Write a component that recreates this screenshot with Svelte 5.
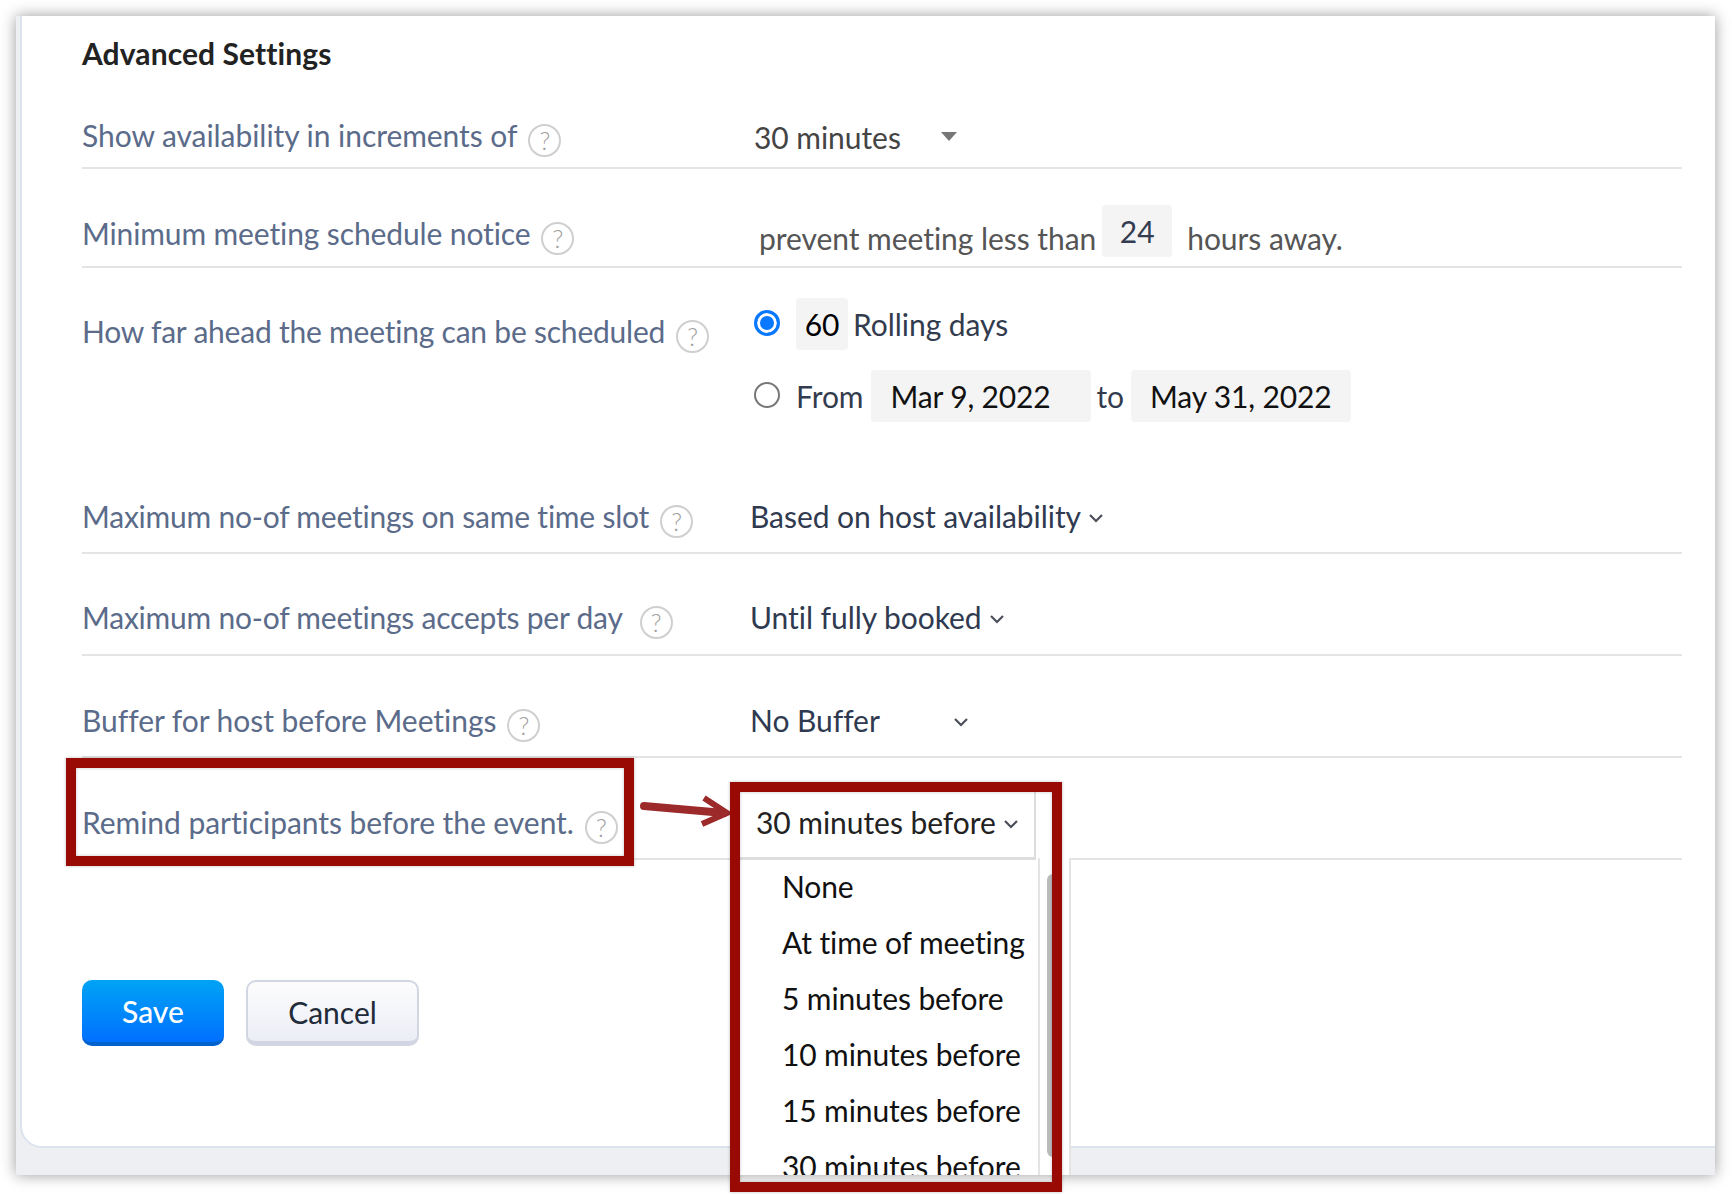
<script>
  const options = ['None', 'At time of meeting', '5 minutes before', '10 minutes before', '15 minutes before', '30 minutes before'];
</script>

{#snippet help()}
  <span class="help">?</span>
{/snippet}

{#snippet chevron()}
  <svg class="chevron" viewBox="0 0 14 10" width="14" height="10" aria-hidden="true">
    <path d="M1 2 L7 8 L13 2" fill="none" stroke="#4a4f5a" stroke-width="2.2" />
  </svg>
{/snippet}

<div class="page">
  <div class="window">
    <div class="card">
      <h2>Advanced Settings</h2>

      <div class="row first">
        <div class="label">Show availability in increments of {@render help()}</div>
        <div class="value increments">
          <span>30 minutes</span>
          <i class="caret"></i>
        </div>
      </div>

      <div class="row notice">
        <div class="label snug">Minimum meeting schedule notice {@render help()}</div>
        <div class="value prevent">
          <span>prevent meeting less than</span>
          <span class="field hours">24</span>
          <span>hours away.</span>
        </div>
      </div>

      <div class="row ahead">
        <div class="label tight">How far ahead the meeting can be scheduled {@render help()}</div>
        <div class="value stack">
          <div class="line">
            <span class="radio on"></span>
            <span class="field days">60</span>
            <span>Rolling days</span>
          </div>
          <div class="line second">
            <span class="radio"></span>
            <span class="from">From</span>
            <span class="field date">Mar 9, 2022</span>
            <span class="to">to</span>
            <span class="field date">May 31, 2022</span>
          </div>
        </div>
      </div>

      <div class="row">
        <div class="label tight">Maximum no-of meetings on same time slot {@render help()}</div>
        <div class="value select">Based on host availability {@render chevron()}</div>
      </div>

      <div class="row booked">
        <div class="label tight">Maximum no-of meetings accepts per day {@render help()}</div>
        <div class="value select">Until fully booked {@render chevron()}</div>
      </div>

      <div class="row">
        <div class="label">Buffer for host before Meetings {@render help()}</div>
        <div class="value select buffer">No Buffer {@render chevron()}</div>
      </div>

      <div class="row">
        <div class="label">Remind participants before the event. {@render help()}</div>
        <div class="value dropdown">
          <div class="trigger">30 minutes before {@render chevron()}</div>
          <div class="menu">
            <ul>
              {#each options as option}
                <li>{option}</li>
              {/each}
            </ul>
            <span class="thumb"></span>
          </div>
        </div>
      </div>

      <div class="actions">
        <button class="save">Save</button>
        <button class="cancel">Cancel</button>
      </div>
    </div>
  </div>

  <!-- annotations drawn over the screenshot -->
  <div class="mark mark-label"></div>
  <div class="mark mark-menu"></div>
  <svg class="arrow" viewBox="0 0 100 34" width="100" height="34" aria-hidden="true">
    <path d="M8 11 L88 18" stroke="#9c2a2a" stroke-width="8" stroke-linecap="round" fill="none" />
    <path d="M68 3 L91 18 L66 29" stroke="#9c2a2a" stroke-width="6" fill="none" />
  </svg>
</div>

<style>
  :global(body) {
    background: #fff;
    font-family: Lato, "Liberation Sans", sans-serif;
  }

  .page {
    position: relative;
    width: 1732px;
    height: 1194px;
    overflow: hidden;
    padding: 16px 0 0 16px;
    box-sizing: border-box;
  }

  .window {
    width: 1699px;
    height: 1159px;
    background: #eeeff3;
    box-shadow: 0 0 14px rgba(0, 0, 0, 0.4);
    overflow: hidden;
  }

  .card {
    box-sizing: border-box;
    height: 1132px;
    margin-left: 4px;
    padding: 0 33px 0 60px;
    background: #fff;
    border-left: 2px solid #dde3ee;
    border-bottom: 2px solid #dde3ee;
    border-bottom-left-radius: 22px;
  }

  h2 {
    margin: 0;
    padding-top: 17px;
    height: 41px;
    font-size: 30px;
    line-height: 40px;
    font-weight: 700;
    letter-spacing: 0.1px;
    color: #222;
  }

  .row {
    display: grid;
    grid-template-columns: 669px 1fr;
    align-items: end;
    box-sizing: border-box;
    height: 102px;
    padding-bottom: 16px;
    border-bottom: 2px solid #e4e4e4;
    font-size: 30px;
    line-height: 40px;
    letter-spacing: -0.05px;
  }

  .row.first {
    height: 95px;
    padding-bottom: 12px;
  }

  .row.notice {
    height: 99px;
    padding-bottom: 13px;
  }

  .row.booked { padding-bottom: 17px; }
  .row.booked .help { margin-left: 6px; }

  /* this row and the next share one rule, at the bottom of the next */
  .row.ahead {
    height: 184px;
    align-items: start;
    padding: 30px 0 0;
    border-bottom: 0;
  }

  .row.ahead .label { margin-top: 13px; }

  .label {
    display: flex;
    align-items: center;
    gap: 11px;
    color: #5b6b8a;
    white-space: nowrap;
  }

  .label.snug { letter-spacing: -0.12px; }
  .label.tight { letter-spacing: -0.22px; }

  .help {
    position: relative;
    top: 2px;
    flex: none;
    box-sizing: border-box;
    width: 33px;
    height: 33px;
    margin-top: 7px;
    border: 2px solid #cfcfcf;
    border-radius: 50%;
    color: #a0a0a0;
    font-size: 25px;
    font-weight: 300;
    line-height: 29px;
    letter-spacing: 0;
    text-align: center;
  }

  .value {
    display: flex;
    align-items: center;
    white-space: nowrap;
    color: #2f3a50;
  }

  .increments {
    padding-left: 3px;
    margin-bottom: -2px;
    color: #444;
  }

  .caret {
    margin: -2px 0 0 40px;
    border-left: 8px solid transparent;
    border-right: 8px solid transparent;
    border-top: 9px solid #777;
  }

  .field {
    box-sizing: border-box;
    height: 52px;
    background: #f4f4f4;
    border-radius: 4px;
    line-height: 52px;
  }

  .prevent {
    align-items: flex-end;
    padding-left: 8px;
    margin-bottom: -5px;
    color: #555;
  }

  .hours {
    position: relative;
    bottom: 11px;
    width: 70px;
    margin: 0 15px -10px 6px;
    text-align: center;
    color: #333c50;
  }

  .stack {
    display: block;
    color: #333c4e;
  }

  .line {
    display: flex;
    align-items: center;
    height: 52px;
  }

  .line.second { margin-top: 20px; }

  .radio {
    box-sizing: border-box;
    flex: none;
    width: 26px;
    height: 26px;
    margin: -3px 16px 0 3px;
    border: 2px solid #777;
    border-radius: 50%;
    background: #fff;
  }

  .radio.on {
    border: 3px solid #0a78ff;
    box-shadow: inset 0 0 0 3px #fff;
    background: #0a78ff;
  }

  .days {
    width: 52px;
    margin-right: 5px;
    text-align: center;
    color: #000;
  }

  .from { margin: 0 8px 0 0; }

  .date {
    width: 220px;
    padding-left: 19px;
    letter-spacing: -0.15px;
    color: #111;
  }

  .to { margin: 0 7px 0 5px; }

  .select {
    gap: 8px;
    margin-left: -1px;
  }

  .buffer { gap: 0; }
  .buffer .chevron { margin-left: 74px; }

  .chevron { margin-top: 4px; }

  .dropdown {
    position: relative;
    display: block;
    color: #222;
  }

  .trigger {
    position: absolute;
    left: -12px;
    bottom: -18px;
    display: flex;
    align-items: center;
    gap: 8px;
    box-sizing: border-box;
    width: 297px;
    height: 70px;
    padding: 0 0 3px 17px;
    background: #fff;
    border-right: 2px solid #ddd;
    border-bottom: 3px solid #ddd;
    z-index: 2;
  }

  .menu {
    position: absolute;
    left: -12px;
    top: 16px;
    box-sizing: border-box;
    width: 332px;
    height: 330px;
    background: #fff;
    border-right: 2px solid #e4e4e4;
    z-index: 1;
  }

  /* divider left of the scrollbar track */
  .menu::before {
    content: "";
    position: absolute;
    left: 299px;
    top: 0;
    bottom: 0;
    width: 2px;
    background: #e4e4e4;
  }

  ul {
    margin: 0;
    padding: 0 0 0 43px;
    list-style: none;
    letter-spacing: -0.12px;
    color: #111;
  }

  li {
    height: 56px;
    line-height: 56px;
  }

  .thumb {
    position: absolute;
    left: 308px;
    top: 16px;
    width: 12px;
    height: 283px;
    border-radius: 6px;
    background: #bbb;
  }

  .actions {
    display: flex;
    gap: 22px;
    margin-top: 120px;
  }

  button {
    box-sizing: border-box;
    height: 66px;
    border-radius: 10px;
    font-family: inherit;
    font-size: 30px;
    padding: 0;
  }

  .save {
    width: 142px;
    border: 0;
    border-bottom: 4px solid #0062cc;
    background: linear-gradient(#00a3f5, #0070ff);
    color: #fff;
    font-weight: 500;
  }

  .cancel {
    width: 173px;
    border: 2px solid #d2d5e2;
    border-bottom-width: 5px;
    background: linear-gradient(#fcfcfd, #eceef6);
    color: #222b3a;
  }

  .mark {
    position: absolute;
    box-sizing: border-box;
    border: 10px solid #9a0a04;
    box-shadow: 0 0 3px rgba(0, 0, 0, 0.25), inset 0 0 3px rgba(0, 0, 0, 0.25);
    z-index: 5;
  }

  .mark-label {
    left: 66px;
    top: 758px;
    width: 568px;
    height: 108px;
  }

  .mark-menu {
    left: 730px;
    top: 782px;
    width: 332px;
    height: 410px;
  }

  .arrow {
    position: absolute;
    left: 636px;
    top: 795px;
    z-index: 4;
  }
</style>
